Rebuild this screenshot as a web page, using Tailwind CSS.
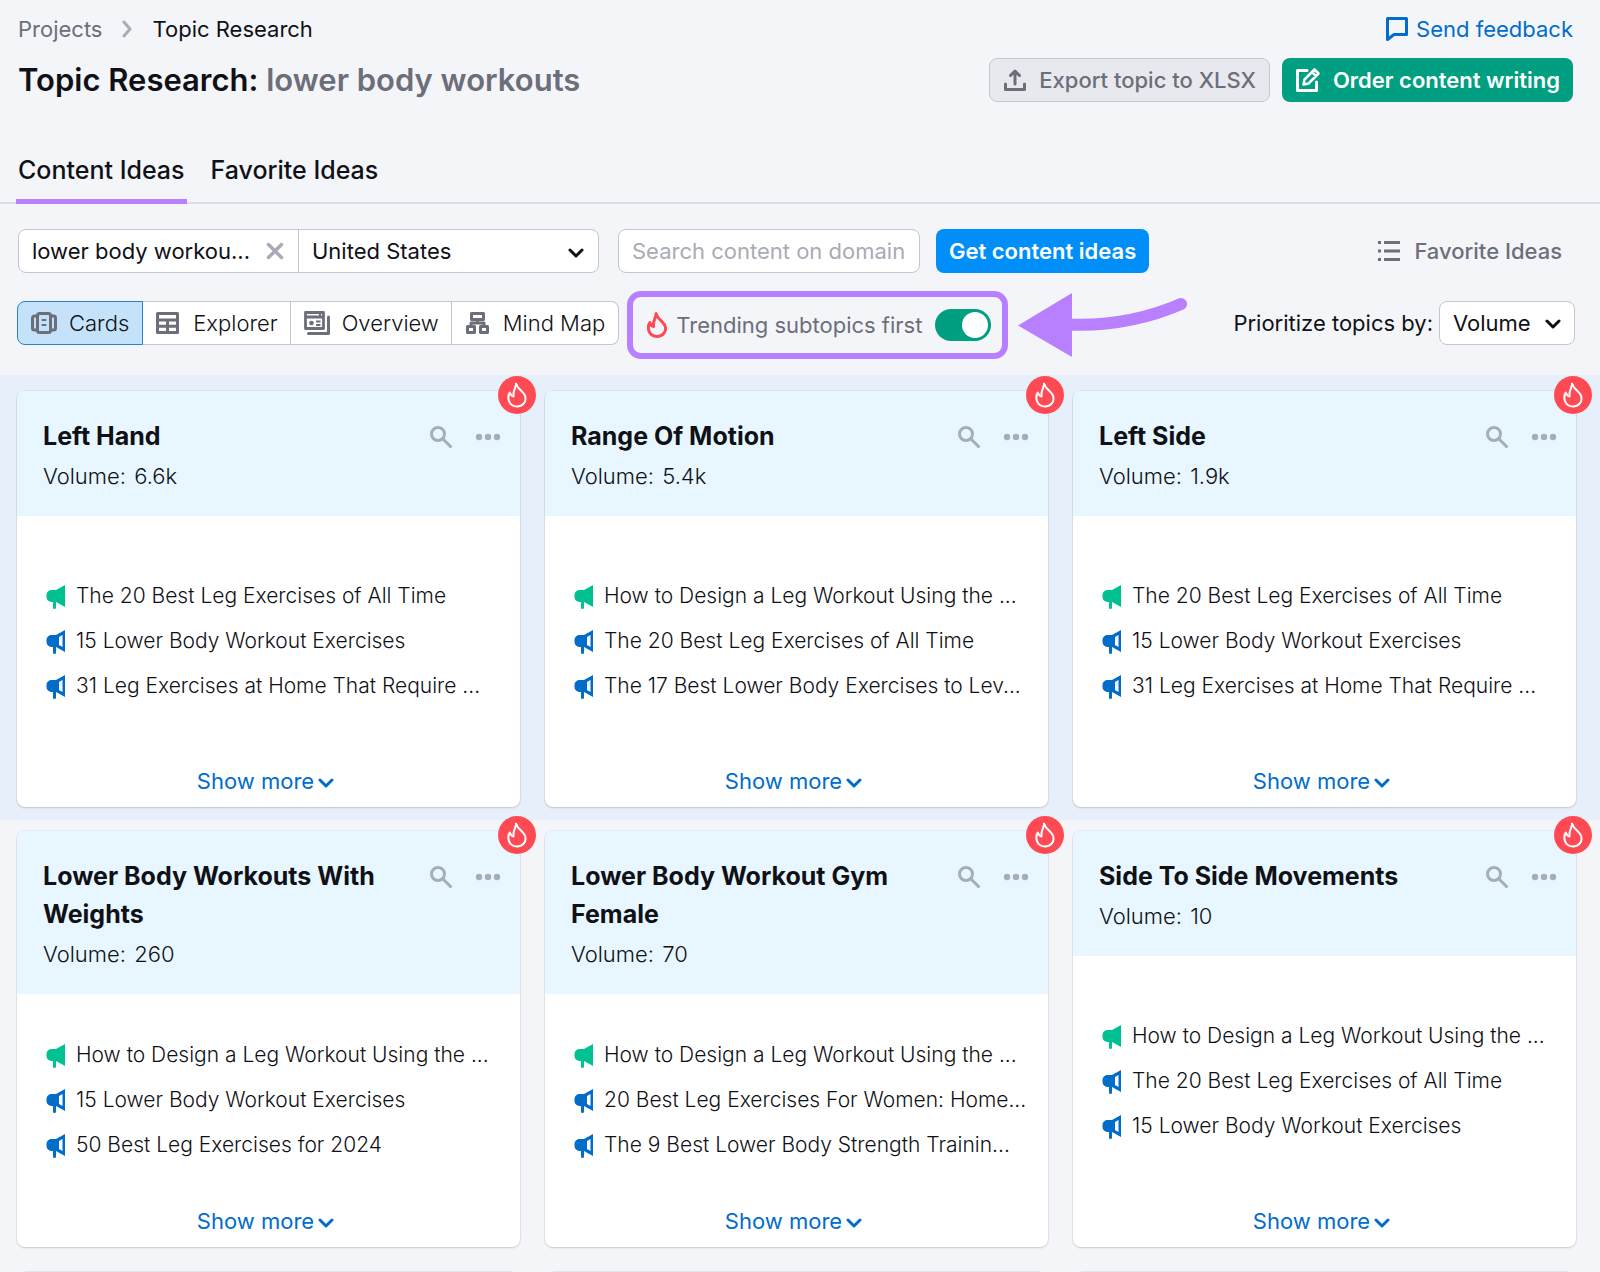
<!DOCTYPE html>
<html lang="en">
<head>
    <meta charset="UTF-8">
    <meta name="viewport" content="width=device-width, initial-scale=1.0">
    <title>Topic Research: lower body workouts</title>
    <script src="https://cdn.jsdelivr.net/npm/@tailwindcss/browser@4"></script>
</head>
<body class="bg-[#f4f5f9] font-['Inter',sans-serif] text-[#0f1116] text-[22px] leading-[30px] overflow-x-hidden">

    <!-- Shared icons -->
    <svg class="hidden">
        <symbol id="flame" viewBox="0 0 20 26">
            <path d="M9 1.600C9.400 5.500 5.600 8.500 6.600 14.400C4.600 14.200 3.600 12.600 2.800 10.600C.2 14.600 .8 24.400 10 24.400C16 24.400 18.600 20 18.600 16.400C18.600 9.600 11.600 9.400 9 1.600Z" fill="none" stroke="currentColor" stroke-linejoin="round" />
        </symbol>
        <symbol id="chevron" viewBox="0 0 16 10">
            <path d="M2 2l6 6 6-6" fill="none" stroke="currentColor" stroke-width="3" stroke-linecap="round" stroke-linejoin="round" />
        </symbol>
        <symbol id="search" viewBox="0 0 22 22">
            <circle cx="8" cy="8" r="6.500" fill="none" stroke="currentColor" stroke-width="3" />
            <path d="M13 13l7.500 7.500" stroke="currentColor" stroke-width="3" stroke-linecap="round" />
        </symbol>
        <symbol id="dots" viewBox="0 0 26 8">
            <circle cx="4" cy="4" r="3.200" fill="currentColor" />
            <circle cx="13" cy="4" r="3.200" fill="currentColor" />
            <circle cx="22" cy="4" r="3.200" fill="currentColor" />
        </symbol>
        <symbol id="horn-solid" viewBox="0 0 20 24">
            <path d="M19 0v22l-9-5v5.500a1.500 1.500 0 0 1-3 0V17H5.500a5 5 0 0 1-5-5v-2a5 5 0 0 1 5-5H10Z" fill="currentColor" />
        </symbol>
        <symbol id="horn" viewBox="0 0 20 24">
            <path fill-rule="evenodd" d="M19 0v22l-9-5v5.500a1.500 1.500 0 0 1-3 0V17H5.500a5 5 0 0 1-5-5v-2a5 5 0 0 1 5-5H10ZM16.500 5L13 7v8l3.500 2Z" fill="currentColor" />
        </symbol>
    </svg>

    <header class="border-b-2 border-[#dcdde2]">
        <div class="flex justify-between pl-[18px] pr-[27px] pt-[14px]">
            <div>
                <nav class="flex items-center gap-[19px]">
                    <a href="#" class="text-[#6c6e79]">Projects</a>
                    <svg class="w-3 h-[18px] text-[#a9abb6]" viewBox="0 0 12 18"><path d="M3 2l6 7-6 7" fill="none" stroke="currentColor" stroke-width="3" stroke-linecap="round" stroke-linejoin="round" /></svg>
                    <span>Topic Research</span>
                </nav>
                <h1 class="mt-4 text-[31px] leading-10 font-semibold">Topic Research: <span class="text-[#6c6e79]">lower body workouts</span></h1>
            </div>
            <div class="flex flex-col items-end gap-[14px]">
                <a href="#" class="flex items-center gap-2 text-[#006dca]">
                    <svg class="w-[22px] h-6" viewBox="0 0 22 24"><path d="M1.500 1.500h19v16H8l-6.500 5Z" fill="none" stroke="currentColor" stroke-width="3" stroke-linejoin="round" /></svg>
                    Send feedback
                </a>
                <div class="flex gap-3">
                    <button class="h-11 flex items-center gap-3 px-[13px] rounded-lg border border-[#c4c7cf] bg-[#e8e9ef] text-[#6c6e79] font-medium">
                        <svg class="w-6 h-6" viewBox="0 0 24 24" fill="none" stroke="currentColor" stroke-width="3" stroke-linecap="round" stroke-linejoin="round"><path d="M2.500 16v5.500h19V16M12 16V4M7.500 7.500L12 3l4.500 4.500" /></svg>
                        Export topic to XLSX
                    </button>
                    <button class="h-11 flex items-center gap-3 px-[13px] rounded-lg bg-[#009f81] text-white font-semibold">
                        <svg class="w-[26px] h-[26px]" viewBox="0 0 26 26" fill="none" stroke="currentColor" stroke-width="3" stroke-linejoin="round"><path d="M12 3.500H2.500v20h19V15" stroke-linecap="round" /><path d="M8.500 17.500l1-5L19.500 2.500l4 4-10 10ZM17 5l4 4" stroke-width="2.500" /></svg>
                        Order content writing
                    </button>
                </div>
            </div>
        </div>
        <nav class="flex px-4 mt-[50px] gap-[22px] text-[25px] leading-9 font-medium">
            <a href="#" class="-mb-[2px] px-[2px] pb-[11px] border-b-[5px] border-[#b880ff]">Content Ideas</a>
            <a href="#" class="px-[2px]">Favorite Ideas</a>
        </nav>
    </header>

    <main>
        <!-- Search row -->
        <div class="flex items-center pl-[18px] pr-[38px] mt-[25px]">
            <div class="flex w-[581px] h-11 rounded-lg border border-[#c4c7cf] bg-white">
                <div class="flex items-center w-[280px] pl-[13px] pr-[14px] border-r border-[#c4c7cf]">
                    <input type="text" aria-label="Topic" value="lower body workou..." class="flex-1 min-w-0 outline-none">
                    <button aria-label="Clear" class="text-[#a9abb6]">
                        <svg class="w-[18px] h-[18px]" viewBox="0 0 18 18"><path d="M2.500 2.500l13 13M15.500 2.500l-13 13" stroke="currentColor" stroke-width="3.500" stroke-linecap="round" /></svg>
                    </button>
                </div>
                <div class="relative flex-1">
                    <select aria-label="Country" class="appearance-none w-full h-full pl-[13px] outline-none">
                        <option>United States</option>
                    </select>
                    <svg class="absolute right-[14px] top-[18px] w-4 h-[10px] pointer-events-none"><use href="#chevron" /></svg>
                </div>
            </div>
            <input type="text" aria-label="Domain" placeholder="Search content on domain" class="ml-[19px] w-[302px] h-11 px-[13px] rounded-lg border border-[#c4c7cf] bg-white placeholder:text-[#a9abb6]">
            <button class="ml-4 h-11 px-[13px] rounded-lg bg-[#008ff8] text-white font-semibold">Get content ideas</button>
            <a href="#" class="ml-auto flex items-center gap-[14px] text-[#6c6e79] font-medium">
                <svg class="w-[22px] h-5" viewBox="0 0 22 20" fill="currentColor"><path d="M0 0h3v3H0ZM6 0h16v3H6ZM0 8.500h3v3H0ZM6 8.500h16v3H6ZM0 17h3v3H0ZM6 17h16v3H6Z" /></svg>
                Favorite Ideas
            </a>
        </div>

        <!-- View switcher and sorting -->
        <div class="flex items-center pl-[17px] pr-[25px] mt-[17px] h-[70px]">
            <div class="flex h-11 mb-[5px] font-light">
                <button class="flex items-center gap-3 px-[13px] rounded-l-lg border border-[#2b80cf] bg-[#c4e3fb]">
                    <svg class="w-[26px] h-[22px] text-[#6c6e79]" viewBox="0 0 26 22" fill="none" stroke="currentColor" stroke-width="3" stroke-linecap="round"><rect x="6.500" y="1.500" width="13" height="19" rx="2" /><path d="M6 4H3.500a2 2 0 0 0-2 2v10a2 2 0 0 0 2 2H6M20 4h2.500a2 2 0 0 1 2 2v10a2 2 0 0 1-2 2H20" /><path d="M11.500 8h3M11.500 13h3" stroke-width="2.200" /></svg>
                    Cards
                </button>
                <button class="flex items-center gap-[14px] pl-[13px] pr-3 border-y border-r border-[#c4c7cf] bg-white">
                    <svg class="w-[23px] h-[22px] text-[#6c6e79]" viewBox="0 0 23 22" fill="none" stroke="currentColor" stroke-width="3" stroke-linejoin="round"><path d="M1.500 1.500h20v19h-20ZM1.500 8h20M1.500 14.200h20M11.500 8v12" /></svg>
                    Explorer
                </button>
                <button class="flex items-center gap-3 pl-[13px] pr-3 border-y border-r border-[#c4c7cf] bg-white">
                    <svg class="w-[26px] h-6 text-[#6c6e79]" viewBox="0 0 26 24" fill="none" stroke="currentColor" stroke-width="3" stroke-linejoin="round"><path d="M1.500 1.500h18v16h-18ZM2 6h17" stroke-width="2.800" /><path d="M4.500 22.500h20V6" stroke-linecap="round" /><path d="M12 10.500h4.500M12 14h4.500M15 4h2" stroke-width="1.800" /><circle cx="7.500" cy="12" r="2.300" fill="currentColor" stroke="none" /></svg>
                    Overview
                </button>
                <button class="flex items-center gap-[14px] pl-[14px] pr-[13px] rounded-r-lg border-y border-r border-[#c4c7cf] bg-white">
                    <svg class="w-[23px] h-[22px] text-[#6c6e79]" viewBox="0 0 23 22" fill="none" stroke="currentColor" stroke-width="3" stroke-linejoin="round"><path d="M5.500 1.500h12v6h-12ZM1.500 14.500h7v6h-7ZM14.500 14.500h7v6h-7ZM11.500 8v3M5 14v-3h13v3" /></svg>
                    Mind Map
                </button>
            </div>
            <label class="ml-2 h-[68px] flex items-center pl-[14px] pr-[11px] rounded-[14px] border-[6px] border-[#b880ff] text-[#6c6e79] cursor-pointer">
                <svg class="w-5 h-[26px] stroke-[3] text-[#ff4953]"><use href="#flame" /></svg>
                <span class="ml-[9px]">Trending subtopics first</span>
                <input type="checkbox" checked class="peer sr-only">
                <span class="ml-[13px] w-14 h-8 p-[3px] rounded-full bg-[#c4c7cf] peer-checked:bg-[#009f81] peer-checked:[&>span]:ml-6">
                    <span class="block w-[26px] h-[26px] rounded-full bg-white"></span>
                </span>
            </label>
            <!-- Pointer to the switch -->
            <svg class="ml-[10px] w-[170px] h-16" viewBox="0 0 170 64" fill="none"><path d="M0 32.500L54 0v64Z" fill="#b880ff" /><path d="M50 31.500Q110 34 163 11" stroke="#b880ff" stroke-width="12" stroke-linecap="round" /></svg>
            <div class="ml-auto mb-[5px] flex items-center gap-[6px]">
                <label for="sort">Prioritize topics by:</label>
                <div class="relative">
                    <select id="sort" class="appearance-none w-[136px] h-11 pl-[13px] rounded-lg border border-[#c4c7cf] bg-white">
                        <option>Volume</option>
                    </select>
                    <svg class="absolute right-[14px] top-[18px] w-4 h-[10px] pointer-events-none"><use href="#chevron" /></svg>
                </div>
            </div>
        </div>

        <div id="rows" class="mt-[15px]"></div>

        <!-- Top edge of the next row -->
        <div class="grid grid-cols-3 gap-[25px] pl-[17px] pr-[24px]">
            <div class="mx-2 h-px bg-[#e2e4e9]"></div>
            <div class="mx-2 h-px bg-[#e2e4e9]"></div>
            <div class="mx-2 h-px bg-[#e2e4e9]"></div>
        </div>
    </main>

    <script>
        const topics = [
            { title: 'Left Hand', volume: '6.6k', ideas: ['The 20 Best Leg Exercises of All Time', '15 Lower Body Workout Exercises', '31 Leg Exercises at Home That Require ...'] },
            { title: 'Range Of Motion', volume: '5.4k', ideas: ['How to Design a Leg Workout Using the ...', 'The 20 Best Leg Exercises of All Time', 'The 17 Best Lower Body Exercises to Lev...'] },
            { title: 'Left Side', volume: '1.9k', ideas: ['The 20 Best Leg Exercises of All Time', '15 Lower Body Workout Exercises', '31 Leg Exercises at Home That Require ...'] },
            { title: 'Lower Body Workouts With Weights', volume: '260', ideas: ['How to Design a Leg Workout Using the ...', '15 Lower Body Workout Exercises', '50 Best Leg Exercises for 2024'] },
            { title: 'Lower Body Workout Gym Female', volume: '70', ideas: ['How to Design a Leg Workout Using the ...', '20 Best Leg Exercises For Women: Home...', 'The 9 Best Lower Body Strength Trainin...'] },
            { title: 'Side To Side Movements', volume: '10', ideas: ['How to Design a Leg Workout Using the ...', 'The 20 Best Leg Exercises of All Time', '15 Lower Body Workout Exercises'] }
        ];

        function createIdea(text, index) {
            const icon = index === 0
                ? '<svg class="w-5 h-6 mt-px shrink-0 text-[#00c192]"><use href="#horn-solid" /></svg>'
                : '<svg class="w-5 h-6 mt-px shrink-0 text-[#006dca]"><use href="#horn" /></svg>';
            return `<li class="flex items-center gap-[10px]">${icon}<span class="whitespace-nowrap">${text}</span></li>`;
        }

        function createCard(topic) {
            return `
                <article class="relative flex flex-col min-h-[416px] rounded-lg bg-white shadow-[0_0_1px_1px_rgba(25,27,35,0.06),0_1px_2px_rgba(25,27,35,0.14)]">
                    <div class="flex items-start rounded-t-lg bg-[#e8f7ff] pl-[26px] pr-[19px] pt-[26px] pb-[23px]">
                        <div class="flex-1">
                            <h2 class="pr-10 text-[25px] leading-[38px] font-bold">${topic.title}</h2>
                            <p class="mt-1 leading-[34px] font-light">Volume: <span class="ml-[2px]">${topic.volume}</span></p>
                        </div>
                        <button aria-label="Search" class="mt-[9px] text-[#a6adb6]"><svg class="w-[22px] h-[22px]"><use href="#search" /></svg></button>
                        <button aria-label="More" class="ml-[23px] mt-4 text-[#a6adb6]"><svg class="w-[26px] h-2"><use href="#dots" /></svg></button>
                    </div>
                    <ul class="flex-1 flex flex-col justify-center gap-[15px] pl-[29px] text-[21px] font-light">
                        ${topic.ideas.map(createIdea).join('')}
                    </ul>
                    <button class="flex items-center justify-center gap-1 pb-[11px] pr-[6px] text-[#006dca]">
                        Show more
                        <svg class="w-4 h-[10px] mt-1"><use href="#chevron" /></svg>
                    </button>
                    <span class="absolute -top-[15px] -right-4 w-[38px] h-[38px] flex items-center justify-center rounded-full bg-[#ff4953] text-white">
                        <svg class="w-5 h-[26px] stroke-2"><use href="#flame" /></svg>
                    </span>
                </article>
            `;
        }

        // Three cards in a row, the first row is highlighted
        let html = '';
        for (let i = 0; i < topics.length; i += 3) {
            const row = topics.slice(i, i + 3).map(createCard).join('');
            html += i === 0
                ? `<section class="grid grid-cols-3 gap-[25px] pl-[17px] pr-[24px] pt-4 pb-[13px] bg-[#e7effa]">${row}</section>`
                : `<section class="grid grid-cols-3 gap-[25px] pl-[17px] pr-[24px] pt-[11px] pb-6">${row}</section>`;
        }
        document.getElementById('rows').innerHTML = html;
    </script>
</body>
</html>
